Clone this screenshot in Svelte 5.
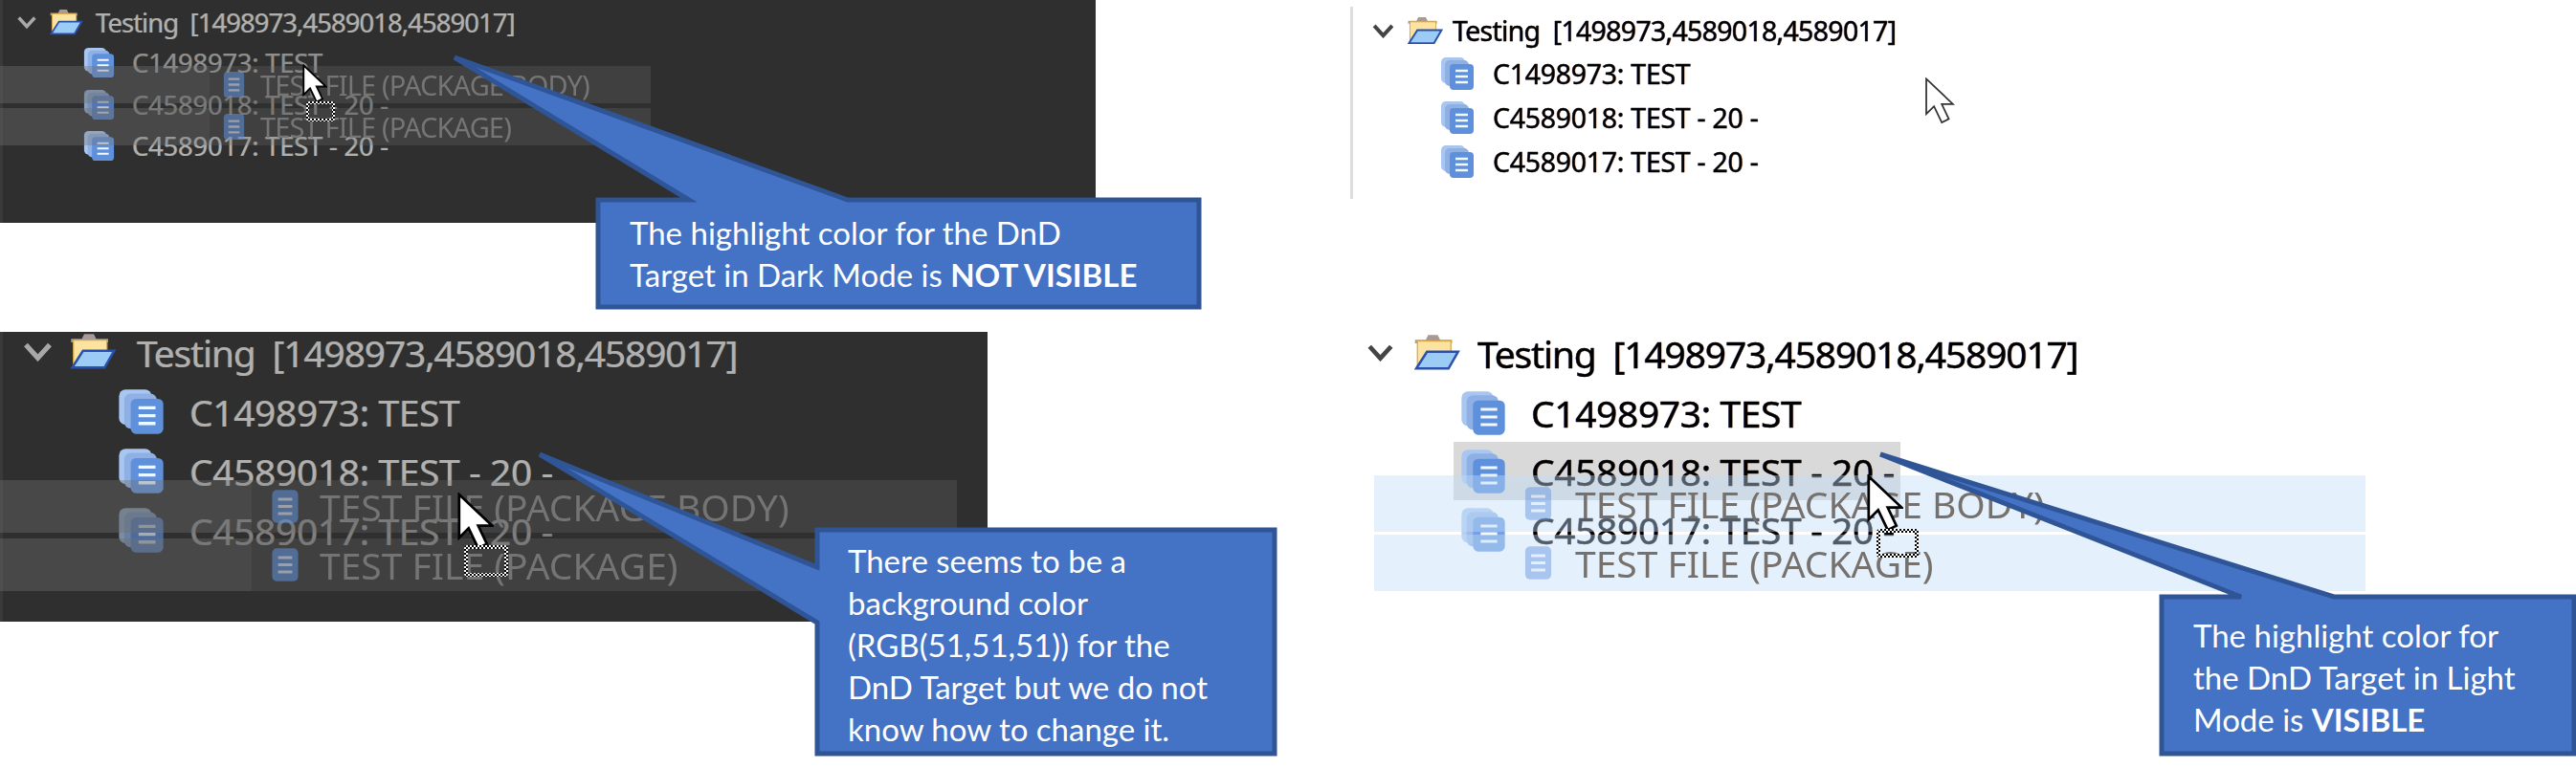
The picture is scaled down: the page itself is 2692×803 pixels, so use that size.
<script lang="ts">
  const rows = ['C1498973: TEST', 'C4589018: TEST - 20 -', 'C4589017: TEST - 20 -']
  const ghosts = ['TEST FILE (PACKAGE BODY)', 'TEST FILE (PACKAGE)']
</script>

{#snippet chevron()}
  <svg class="chevron" viewBox="0 0 24 16"><path d="M2 2l10 11L22 2" fill="none" stroke="currentColor" stroke-width="4.2" /></svg>
{/snippet}

{#snippet folder()}
  <svg class="folder" viewBox="0 0 40 32">
    <path d="M3 5h9l2-4h8l2 4h10v3H3z" fill="#a89a94" />
    <path d="M5 6h28v9H15L7 28H5z" fill="#fde3a0" stroke="#d9a94a" stroke-width="1" />
    <path d="M13 15h26l-8 14H4z" fill="#9ccbf5" stroke="#2a50ae" stroke-width="2" />
  </svg>
{/snippet}

{#snippet stack()}
  <svg class="stack" viewBox="0 0 36 36">
    <rect x="1" y="1" width="25" height="27" rx="5" fill="#a9c6f0" />
    <rect x="5" y="4" width="25" height="27" rx="5" fill="#8fb0e4" />
    <rect x="10" y="8" width="25" height="27" rx="4" fill="#5f90dc" />
    <path d="M16 15h13M16 21h13M16 27h13" stroke="#f4f8ff" stroke-width="2.4" />
  </svg>
{/snippet}

{#snippet ghostIcon()}
  <svg class="ghost-icon" viewBox="0 0 24 30">
    <rect x="1" y="1" width="22" height="28" rx="4" fill="#5f90dc" />
    <path d="M6 9h12M6 15h12M6 21h12" stroke="#e8eefc" stroke-width="2.4" />
  </svg>
{/snippet}

{#snippet cursor()}
  <svg class="cursor" viewBox="-2 -2 42 68">
    <path d="M0 0v50l11-11 11 23 10-5-10-21h16z" fill="#fff" stroke="#000" stroke-width="3" />
  </svg>
{/snippet}

{#snippet tree(mode)}
  <div class="head">
    {@render chevron()}
    {@render folder()}
    <span class="label">Testing&nbsp; [1498973,4589018,4589017]</span>
  </div>
  <div class="rows">
    {#each rows as row, i}
      <div class="row" class:target={mode === 'target' && i === 1}>
        {@render stack()}
        <span class="label">{row}</span>
      </div>
    {/each}
  </div>
{/snippet}

{#snippet dragged()}
  <div class="drag">
    {#each ghosts as ghost}
      <div class="ghost">
        <div class="ghost-lead"></div>
        {@render ghostIcon()}
        <span class="ghost-label">{ghost}</span>
      </div>
    {/each}
  </div>
  <div class="drop-cursor">{@render cursor()}</div>
  <div class="drop-box"></div>
{/snippet}

<main class="sheet">
  <section class="shot dark a">
    {@render tree('plain')}
    {@render dragged()}
  </section>

  <section class="shot dark b">
    {@render tree('plain')}
    {@render dragged()}
  </section>

  <section class="shot light c">
    {@render tree('plain')}
    <div class="drop-cursor">{@render cursor()}</div>
  </section>

  <section class="shot light d">
    {@render tree('target')}
    {@render dragged()}
  </section>

  <svg class="wedges" viewBox="0 0 2692 803">
    <path d="M475 60L886 209H1253V321H625V209H720Z" />
    <path d="M564 475L854 593V554H1332V788H854V651Z" />
    <path d="M1965 475L2439 624H2690V788H2259V624H2342Z" />
  </svg>

  <p class="note n1">The highlight color for the DnD<br />Target in Dark Mode is <b>NOT VISIBLE</b></p>
  <p class="note n2">There seems to be a<br />background color<br />(RGB(51,51,51)) for the<br />DnD Target but we do not<br />know how to change it.</p>
  <p class="note n3">The highlight color for<br />the DnD Target in Light<br />Mode is <b>VISIBLE</b></p>
</main>

<style>
  :global(body) {
    margin: 0;
    background: #fff;
  }

  .sheet {
    position: relative;
    width: 2692px;
    height: 803px;
    overflow: hidden;
    background: #fff;
    font-family: "Noto Sans", "Open Sans", sans-serif;
  }

  .shot {
    position: absolute;
    box-sizing: border-box;
    display: flex;
    flex-direction: column;
  }

  .dark {
    background: #2f2f2f;
    color: #b0b0b0;
    border-left: 3px solid #3a3a3a;
  }

  .dark .label {
    text-shadow: 0.7px 0 rgba(214, 140, 60, 0.5), -0.7px 0 rgba(80, 160, 220, 0.5);
  }

  .light {
    color: #000;
  }

  .light .label {
    -webkit-text-stroke: 0.3px #000;
    text-shadow: 0.6px 0 rgba(190, 90, 20, 0.45), -0.6px 0 rgba(40, 60, 190, 0.45);
  }

  .head,
  .row {
    display: flex;
    align-items: center;
  }

  .label {
    white-space: nowrap;
    letter-spacing: -0.03em;
    filter: blur(0.5px);
  }

  .row .label {
    letter-spacing: -0.01em;
  }

  .rows {
    display: flex;
    flex-direction: column;
  }

  .chevron {
    flex: none;
    color: #a8a8a8;
  }

  .light .chevron {
    color: #444;
  }

  .folder,
  .stack,
  .ghost-icon {
    flex: none;
    filter: blur(0.4px);
  }

  .drag {
    position: absolute;
    display: flex;
    flex-direction: column;
  }

  .ghost {
    display: flex;
    align-items: center;
    box-sizing: border-box;
    width: 100%;
  }

  .ghost-lead {
    flex: none;
    align-self: stretch;
  }

  .ghost-icon {
    opacity: 0.55;
  }

  .ghost-label {
    white-space: nowrap;
    filter: blur(0.7px);
  }

  .drop-cursor {
    position: absolute;
    display: flex;
  }

  .cursor {
    display: block;
    width: 100%;
    height: 100%;
  }

  /* checkered outline of the drag feedback */
  .drop-box {
    position: absolute;
    box-sizing: border-box;
    padding: 4px;
    border-radius: 3px;
    background: repeating-conic-gradient(#fff 0 25%, #000 0 50%) 0 0 / 4px 4px;
    mask: linear-gradient(#000 0 0) content-box exclude, linear-gradient(#000 0 0);
  }

  /* panel top left, dark, small */
  .a {
    left: 0;
    top: 0;
    width: 1145px;
    height: 233px;
    font-size: 27.5px;
    padding: 3px 0 0 15px;
  }

  .a .head {
    height: 40px;
  }

  .a .head .label {
    letter-spacing: -0.035em;
  }

  .a .chevron {
    width: 20px;
    height: 15px;
    margin-right: 11px;
  }

  .a .folder {
    width: 38px;
    height: 29px;
    margin-right: 13px;
  }

  .a .rows {
    margin: 1px 0 0 69px;
  }

  .a .row {
    height: 43.5px;
  }

  .a .stack {
    width: 33px;
    height: 33px;
    margin-right: 18px;
  }

  .a .row:nth-child(2) .stack,
  .a .row:nth-child(1) .label {
    opacity: 0.75;
  }

  .a .row:nth-child(2) .label {
    opacity: 0.6;
  }

  .a .drag {
    left: -3px;
    top: 69px;
    width: 680px;
    gap: 5px;
  }

  .a .ghost {
    height: 39px;
    background: rgba(110, 110, 110, 0.28);
  }

  .a .ghost-lead {
    width: 219px;
    margin-right: 13px;
    background: rgba(120, 120, 120, 0.14);
  }

  .a .ghost-icon {
    width: 25px;
    height: 29px;
    margin-right: 15px;
  }

  .a .ghost-label {
    font-size: 29px;
    letter-spacing: -0.03em;
    color: #757575;
  }

  .a .drop-cursor {
    left: 313px;
    top: 67px;
    width: 26px;
    height: 42px;
  }

  .a .drop-box {
    left: 317px;
    top: 106px;
    width: 30px;
    height: 21px;
    padding: 3px;
  }

  /* panel bottom left, dark, large */
  .b {
    left: 0;
    top: 347px;
    width: 1032px;
    height: 303px;
    font-size: 39px;
    padding: 0 0 0 20px;
  }

  .b .head {
    height: 42px;
  }

  .b .chevron {
    width: 33px;
    height: 20px;
    margin-right: 13px;
  }

  .b .folder {
    width: 53px;
    height: 40px;
    margin-right: 21px;
  }

  .b .rows {
    margin: 10px 0 0 100px;
  }

  .b .row {
    height: 62px;
  }

  .b .stack {
    width: 49px;
    height: 49px;
    margin-right: 26px;
  }

  .b .row:nth-child(3) .stack,
  .b .row:nth-child(3) .label {
    opacity: 0.62;
  }

  .b .drag {
    left: -3px;
    top: 155px;
    width: 1000px;
    gap: 6px;
  }

  .b .ghost {
    height: 55px;
    background: rgba(110, 110, 110, 0.28);
  }

  .b .ghost-lead {
    width: 263px;
    margin-right: 17px;
    background: rgba(120, 120, 120, 0.16);
  }

  .b .ghost-icon {
    width: 36px;
    height: 37px;
    margin-right: 18px;
  }

  .b .ghost-label {
    font-size: 39px;
    color: #747474;
  }

  .b .drop-cursor {
    left: 475px;
    top: 168px;
    width: 38px;
    height: 62px;
  }

  .b .drop-box {
    left: 482px;
    top: 223px;
    width: 46px;
    height: 33px;
  }

  /* panel top right, light, small */
  .c {
    left: 1411px;
    top: 7px;
    width: 660px;
    height: 201px;
    font-size: 28.5px;
    padding: 4px 0 0 20px;
    border-left: 3px solid #dedede;
  }

  .c .head {
    height: 42px;
  }

  .c .head .label {
    letter-spacing: -0.025em;
  }

  .c .chevron {
    width: 23px;
    height: 15px;
    margin-right: 11px;
  }

  .c .folder {
    width: 40px;
    height: 31px;
    margin-right: 10px;
  }

  .c .rows {
    margin: 1px 0 0 71px;
  }

  .c .row {
    height: 46px;
  }

  .c .stack {
    width: 36px;
    height: 36px;
    margin-right: 19px;
  }

  .c .drop-cursor {
    left: 597px;
    top: 74px;
    width: 32px;
    height: 50px;
  }

  .c .cursor path {
    stroke: #333;
    stroke-width: 2.4px;
  }

  /* panel bottom right, light, large */
  .d {
    left: 1414px;
    top: 347px;
    width: 1070px;
    height: 280px;
    font-size: 39px;
    padding: 0 0 0 13px;
  }

  .d .head {
    height: 44px;
  }

  .d .chevron {
    width: 31px;
    height: 18px;
    margin-right: 14px;
  }

  .d .folder {
    width: 56px;
    height: 40px;
    margin-right: 16px;
  }

  .d .rows {
    margin: 10px 0 0 92px;
  }

  .d .row {
    height: 61px;
    width: 467px;
  }

  .d .row.target {
    background: #d9d9d9;
  }

  .d .stack {
    width: 48px;
    height: 48px;
    margin: 0 26px 0 7px;
  }

  .d .row:not(.target):last-child .stack {
    opacity: 0.85;
  }

  .d .drag {
    left: 22px;
    top: 150px;
    width: 1036px;
    gap: 3px;
  }

  .d .ghost {
    height: 59px;
    background: rgba(190, 222, 250, 0.42);
  }

  .d .ghost-lead {
    width: 153px;
  }

  .d .ghost-icon {
    width: 37px;
    height: 37px;
    margin-right: 20px;
    opacity: 0.45;
  }

  .d .ghost-label {
    font-size: 39px;
    color: #77716e;
  }

  .d .drop-cursor {
    left: 537px;
    top: 149px;
    width: 38px;
    height: 62px;
  }

  .d .drop-box {
    left: 547px;
    top: 206px;
    width: 44px;
    height: 30px;
  }

  /* callouts */
  .wedges {
    position: absolute;
    inset: 0;
    width: 2692px;
    height: 803px;
  }

  .wedges path {
    fill: #4472c4;
    stroke: #2f5597;
    stroke-width: 5px;
  }

  .note {
    position: absolute;
    margin: 0;
    color: #fff;
    font-family: Lato, "Noto Sans", sans-serif;
    font-size: 33px;
    line-height: 44px;
    white-space: nowrap;
  }

  .n1 {
    left: 658px;
    top: 221px;
  }

  .n2 {
    left: 886px;
    top: 564px;
  }

  .n3 {
    left: 2292px;
    top: 642px;
  }
</style>
